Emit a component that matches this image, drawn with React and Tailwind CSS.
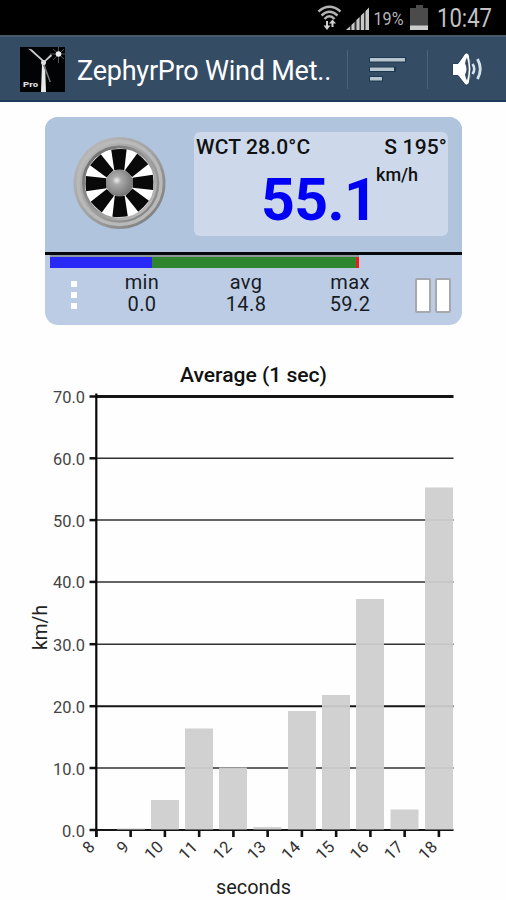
import React from "react";

const bars = [
  [151, 800], [185, 728.5], [219, 767.5], [253.5, 827], [288, 711],
  [322, 695], [356, 599], [390.5, 809.5], [425, 487.5],
];
const gridRows = [
  [396.5, "70.0", 3], [458.3, "60.0", 1.5], [520.1, "50.0", 1.5], [581.9, "40.0", 1.5],
  [644.2, "30.0", 1.5], [706.2, "20.0", 2], [768, "10.0", 1.5], [830, "0.0", 2],
];
const seconds = [8, 9, 10, 11, 12, 13, 14, 15, 16, 17, 18];

function StatusBar() {
  return (
    <div className="flex h-[35px] items-center bg-black">
      <svg width="506" height="35" viewBox="0 0 506 35">
        <g fill="none" stroke="#b4b4b4" strokeWidth="2.4">
          <path d="M318.500 11.500Q329.500 2 340.500 11.500" />
          <path d="M321.500 15.500Q329.500 8 337.500 15.500" />
          <path d="M324.500 19Q329.500 13.500 334.500 19" />
        </g>
        <g stroke="#d0d0d0" strokeWidth="2">
          <path d="M327 21V28M332.500 27V21" />
        </g>
        <path fill="#d0d0d0" d="M323.500 25.500h7l-3.500 4.500zM329 23.500h7l-3.500-4z" />
        <path fill="#333" d="M346 30L369 8V30z" />
        <path fill="#c8c8c8" d="M346 30l4-3.500v3.500zM351.500 30v-5l3-3v8zM356.500 30V20l3-3v13zM361 30V15.500l3-3v17.500zM365.500 30V11L369 7.500v22.500z" />
        <path fill="#4b4b4b" d="M410 8h6V5h7v3h5v22h-18z" />
        <path fill="#ccc" d="M410 25.500h18v4.500h-18z" />
        <text x="373.500" y="24.500" textLength="30" lengthAdjust="spacingAndGlyphs" fontSize="18" fill="#b5b5b5">19%</text>
        <text x="437" y="26.500" textLength="55" lengthAdjust="spacingAndGlyphs" fontSize="25" fill="#c2c2c2">10:47</text>
      </svg>
    </div>
  );
}

function AppIcon() {
  return (
    <svg width="45" height="45" viewBox="0 0 45 45" className="ml-[20px] shrink-0">
      <rect width="45" height="45" fill="#020304" />
      <path d="M22 17l3 0 1 28h-5z" fill="#e8e8e8" />
      <path d="M24 16L8 1.500l4 1 13 12zM23 15l8-8 1 2-8 7z" fill="#ccc" />
      <path d="M24 16l7 19-1.500 0-7-18z" fill="#777" />
      <circle cx="23.500" cy="15.500" r="2.500" fill="#ddd" />
      <path d="M30 7h15M38.500 0v16M33 2l11 10M33 13L44 2" stroke="#666" strokeWidth=".8" />
      <circle cx="38.500" cy="7" r="2.800" fill="#eee" />
      <text x="3" y="40" textLength="15" lengthAdjust="spacingAndGlyphs" fontSize="8" fontWeight="900" fill="#ddd">Pro</text>
    </svg>
  );
}

function Header() {
  return (
    <header className="flex h-[67px] items-center border-t-2 border-b-2 border-t-[#46596c] border-b-[#1d3c59] bg-[#354c65] pt-px">
      <AppIcon />
      <h1 className="mt-[5px] ml-3 w-[270px] whitespace-nowrap text-[27px] leading-none tracking-[-0.22px] text-white">ZephyrPro Wind Met..</h1>
      <div className="h-[39px] w-px bg-[#4e6378]" />
      <svg width="37" height="26" viewBox="0 0 37 26" className="mt-[2px] ml-[21px]">
        <path d="M0 0h37v5.500H0zM0 9.500h27v5.500H0zM0 19h14v5.500H0z" fill="#1c3850" />
        <path d="M1 1h35v3.500H1zM1 10.500h24v3.500H1zM1 20h12v3.500H1z" fill="#b9c5cd" />
      </svg>
      <div className="ml-[21px] h-[39px] w-px bg-[#4e6378]" />
      <svg width="36" height="36" viewBox="0 0 36 36" className="ml-[23px]">
        <path d="M1.500 12.500h5.500L14 2.500q3-2 4.500 2.500 3 13 0 26-1.500 4.500-4.500 2.500L7 24.500H1.500z" fill="#fff" stroke="#1c3850" strokeWidth=".9" />
        <path d="M16 6.500q3.500 11.500 0 23-1.500-2.500-2-6 3-5.500 0-11 .5-3.500 2-6z" fill="#354c65" />
        <path d="M21.500 13q3.500 5 0 10" fill="none" stroke="#d6e2eb" strokeWidth="2.600" />
        <path d="M26.500 8q5.500 10 0 20" fill="none" stroke="#d6e2eb" strokeWidth="2.800" />
      </svg>
    </header>
  );
}

function Fan() {
  const vanes = [0, 45, 90, 135, 180, 225, 270, 315];
  return (
    <svg width="94" height="94" viewBox="0 0 94 94" className="mt-[19px] ml-[28px] shrink-0">
      <defs>
        <linearGradient id="rim" x1="0" y1="0" x2="1" y2="1">
          <stop offset="0" stopColor="#bdbdbd" /><stop offset=".5" stopColor="#a2a2a2" /><stop offset="1" stopColor="#777" />
        </linearGradient>
        <linearGradient id="lip" x1="0" y1="0" x2="1" y2="1">
          <stop offset="0" stopColor="#686868" /><stop offset="1" stopColor="#c4c4c4" />
        </linearGradient>
        <radialGradient id="hub" cx=".4" cy=".4" r=".65">
          <stop offset="0" stopColor="#eee" /><stop offset=".25" stopColor="#aaa" /><stop offset="1" stopColor="#707070" />
        </radialGradient>
      </defs>
      <circle cx="46.500" cy="47" r="46" fill="url(#rim)" />
      <circle cx="46.500" cy="47" r="41.500" fill="none" stroke="#b9b9b9" strokeWidth="3.500" />
      <circle cx="46.500" cy="47" r="36" fill="#fff" stroke="url(#lip)" strokeWidth="3" />
      {vanes.map((a) => (
        <path key={a} transform={`rotate(${a - 1} 46.5 47)`} d="M38.800 13.500Q46.500 12.500 54.200 13.500L51.500 34H41.500z" fill="#090909" />
      ))}
      <circle cx="46.500" cy="47" r="13.500" fill="url(#hub)" />
    </svg>
  );
}

function Stat({ label, value }) {
  return (
    <div className="w-[104px] text-center text-[20px] leading-[22px] tracking-[0.4px] text-[#171c24]">
      <div>{label}</div>
      <div>{value}</div>
    </div>
  );
}

function Meter() {
  return (
    <section className="mt-[15px] ml-[45px] h-[208px] w-[417px] overflow-hidden rounded-[13px] bg-[#bdcce5]">
      <div className="flex h-[135px] bg-[#b0c4de]">
        <Fan />
        <div className="mt-[15px] ml-[27px] h-[104px] w-[254px] rounded-md bg-[#cdd9ea] text-[#111]">
          <div className="flex justify-between pt-[4px] pr-px pl-[2px] text-[21px] leading-[22px] font-medium tracking-[0.15px]">
            <span>WCT 28.0°C</span>
            <span>S 195°</span>
          </div>
          <div className="flex pl-[67px]">
            <span className="w-[115px] pt-[12px] text-[59px] leading-[59px] font-bold tracking-[-0.6px] text-[#0000f5]">55.1</span>
            <span className="pt-[6px] text-[18px] leading-[22px] font-medium">km/h</span>
          </div>
        </div>
      </div>
      <div className="h-[3px] bg-[#06080b]" />
      <div className="ml-[5px] h-[2px] w-[309px] bg-[#8f989c]" />
      <div className="ml-[5px] flex h-[11px] w-[309px]">
        <div className="w-[102px] bg-[#2929f7]" />
        <div className="w-[204px] bg-[#2f862f]" />
        <div className="w-[3px] bg-[#f51919]" />
      </div>
      <div className="flex">
        <div className="mt-[13px] ml-[26px] flex w-[19px] flex-col gap-[5px]">
          <div className="size-[6px] bg-white" />
          <div className="size-[6px] bg-white" />
          <div className="size-[6px] bg-white" />
        </div>
        <div className="mt-[3px] flex">
          <Stat label="min" value="0.0" />
          <Stat label="avg" value="14.8" />
          <Stat label="max" value="59.2" />
        </div>
        <div className="mt-[10px] ml-[13px] flex gap-[4px]">
          <div className="h-[35px] w-[16px] rounded-[2px] border-2 border-[#a5a8ac] bg-white" />
          <div className="h-[35px] w-[16px] rounded-[2px] border-2 border-[#a5a8ac] bg-white" />
        </div>
      </div>
    </section>
  );
}

function Chart() {
  return (
    <svg width="506" height="550" viewBox="0 350 506 550" className="mt-[25px] block">
      <text x="180" y="382" textLength="147" lengthAdjust="spacingAndGlyphs" fontSize="21" fontWeight="500" fill="#111">Average (1 sec)</text>
      {gridRows.map(([y, label, w]) => (
        <g key={label}>
          <line x1="96" x2="453.500" y1={y} y2={y} stroke={w === 1.5 ? "#303030" : "#151515"} strokeWidth={w} />
          <line x1="89.500" x2="97" y1={y} y2={y} stroke="#111" strokeWidth="2.500" />
          <text x="85" y={y + 6.5} textAnchor="end" textLength={label === "0.0" ? 23 : 32} lengthAdjust="spacingAndGlyphs" fontSize="17" fill="#444">{label}</text>
        </g>
      ))}
      <line x1="96.300" x2="96.300" y1="393.500" y2="837" stroke="#080808" strokeWidth="2.200" />
      <rect x="117" y="828.500" width="28" height="1" fill="#d0d0d0" />
      {bars.map(([x, y]) => (
        <rect key={x} x={x} y={y} width="28" height={829.5 - y} fill="#cecece" fillOpacity=".94" />
      ))}
      {seconds.map((s, i) => {
        const x = 96.3 + i * 34.25;
        return (
          <g key={s}>
            <rect x={x - 1.2} y="830" width="2.600" height="7" fill="#111" />
            <text transform={`translate(${x - 0.5} 848) rotate(-45)`} textAnchor="end" fontSize="16.5" fill="#333">{s}</text>
          </g>
        );
      })}
      <text transform="translate(46.5 650) rotate(-90)" textLength="45" lengthAdjust="spacingAndGlyphs" fontSize="20" fill="#222">km/h</text>
      <text x="216" y="893.500" textLength="75" lengthAdjust="spacingAndGlyphs" fontSize="20" fill="#222">seconds</text>
    </svg>
  );
}

export default function App() {
  return (
    <main className="h-[900px] w-[506px] overflow-hidden bg-[#fefefe] font-['Roboto',sans-serif]">
      <StatusBar />
      <Header />
      <Meter />
      <Chart />
    </main>
  );
}
